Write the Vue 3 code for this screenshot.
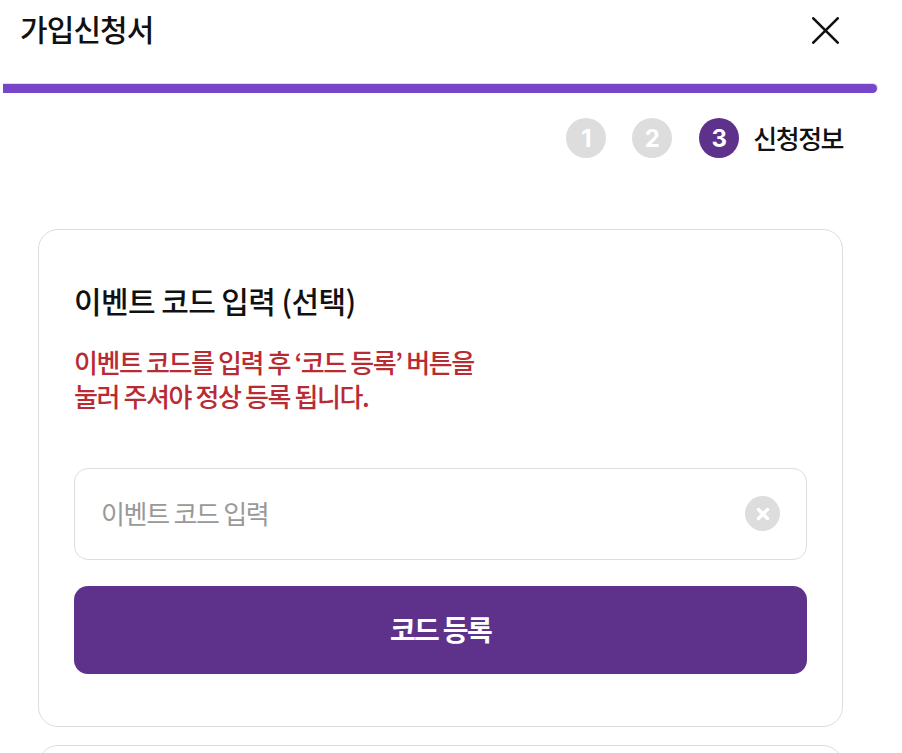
<template>
  <div class="page">
    <header class="head">
      <h1 class="title">가입신청서</h1>
      <button class="close" type="button" aria-label="닫기">
        <svg width="27" height="27" viewBox="0 0 27 27">
          <path d="M1.3 1.3 25.7 25.7M25.7 1.3 1.3 25.7" stroke="#111" stroke-width="2.6" stroke-linecap="round" fill="none" />
        </svg>
      </button>
    </header>

    <div class="track"><div class="fill"></div></div>

    <ol class="steps">
      <li v-for="step in steps" :key="step.no" class="step" :class="{ active: step.label }">
        <span class="dot">{{ step.no }}</span>
        <span v-if="step.label" class="step-label">{{ step.label }}</span>
      </li>
    </ol>

    <section class="card">
      <h2 class="card-title">이벤트 코드 입력 (선택)</h2>
      <p class="notice">이벤트 코드를 입력 후 ‘코드 등록’ 버튼을<br />눌러 주셔야 정상 등록 됩니다.</p>
      <div class="field">
        <input v-model="code" class="input" type="text" placeholder="이벤트 코드 입력" />
        <button class="clear" type="button" aria-label="지우기" @click="code = ''">
          <svg width="14" height="14" viewBox="0 0 14 14">
            <path d="M2.5 2.5 11.5 11.5M11.5 2.5 2.5 11.5" stroke="#fff" stroke-width="3.4" stroke-linecap="round" fill="none" />
          </svg>
        </button>
      </div>
      <button class="submit" type="button">코드 등록</button>
    </section>

    <section class="card next"></section>
  </div>
</template>

<script setup>
import { ref } from 'vue'

const code = ref('')

const steps = [
  { no: 1 },
  { no: 2 },
  { no: 3, label: '신청정보' }
]
</script>

<style>
html,
body {
  background: #fff;
  overflow: hidden;
}
</style>

<style scoped>
.page {
  box-sizing: border-box;
  width: 902px;
  height: 753px;
  overflow: hidden;
  padding-left: 3px;
  font-family: "Noto Sans CJK KR", "Noto Sans", sans-serif;
  color: #111;
}

.head {
  display: flex;
  align-items: center;
  justify-content: space-between;
  width: 875px;
  height: 83px;
  box-sizing: border-box;
  padding: 0 39px 21px 17px;
}

.title {
  margin: 0 0 6px;
  font-size: 30px;
  font-weight: 500;
  line-height: 40px;
  letter-spacing: -0.9px;
}

.close {
  display: flex;
  margin-bottom: 2px;
  padding: 0;
  border: 0;
  background: none;
}

.track {
  width: 875px;
  height: 10px;
  box-sizing: border-box;
  border-top: 1px solid #ddd;
  background: #ddd;
  border-radius: 0 5px 5px 0;
}

.fill {
  width: 874px;
  height: 9px;
  background: #7847c9;
  border-radius: 0 5px 5px 0;
}

.steps {
  display: flex;
  justify-content: flex-end;
  align-items: center;
  gap: 26px;
  width: 840px;
  margin: 25px 0 0;
  padding: 0;
  list-style: none;
}

.step {
  display: flex;
  align-items: center;
  gap: 14px;
}

.dot {
  display: flex;
  align-items: center;
  justify-content: center;
  width: 40px;
  height: 40px;
  border-radius: 50%;
  background: #ddd;
  color: #fff;
  font-family: Inter, sans-serif;
  font-size: 24px;
  font-weight: 700;
}

.step.active .dot {
  margin-left: 1px;
  background: #5e318b;
}

.step-label {
  font-size: 26px;
  font-weight: 500;
  line-height: 40px;
  letter-spacing: -1.5px;
}

.card {
  box-sizing: border-box;
  width: 805px;
  height: 498px;
  margin: 71px 0 0 35px;
  padding: 49px 35px 0;
  border: 1px solid #ddd;
  border-radius: 20px;
}

.card-title {
  margin: 0;
  font-size: 30px;
  font-weight: 500;
  line-height: 42px;
  letter-spacing: -0.6px;
}

.notice {
  margin: 24px 0 0;
  font-size: 26px;
  font-weight: 500;
  line-height: 34px;
  letter-spacing: -1.4px;
  color: #b92b33;
}

.field {
  position: relative;
  margin-top: 55px;
}

.input {
  display: block;
  box-sizing: border-box;
  width: 100%;
  height: 92px;
  padding: 0 70px 3px 26px;
  border: 1px solid #ddd;
  border-radius: 14px;
  outline: none;
  font-family: inherit;
  font-size: 26px;
  letter-spacing: -1.3px;
  color: #111;
}

.input::placeholder {
  color: #999;
  opacity: 1;
}

.clear {
  position: absolute;
  top: 28px;
  right: 27px;
  display: flex;
  align-items: center;
  justify-content: center;
  width: 35px;
  height: 35px;
  padding: 0;
  border: 0;
  border-radius: 50%;
  background: #ddd;
}

.submit {
  display: block;
  width: 100%;
  height: 88px;
  margin-top: 26px;
  padding: 0 0 3px;
  border: 0;
  border-radius: 14px;
  background: #5e318b;
  color: #fff;
  font-family: inherit;
  font-size: 28px;
  font-weight: 700;
  letter-spacing: -1.7px;
}

.next {
  margin-top: 18px;
}
</style>
